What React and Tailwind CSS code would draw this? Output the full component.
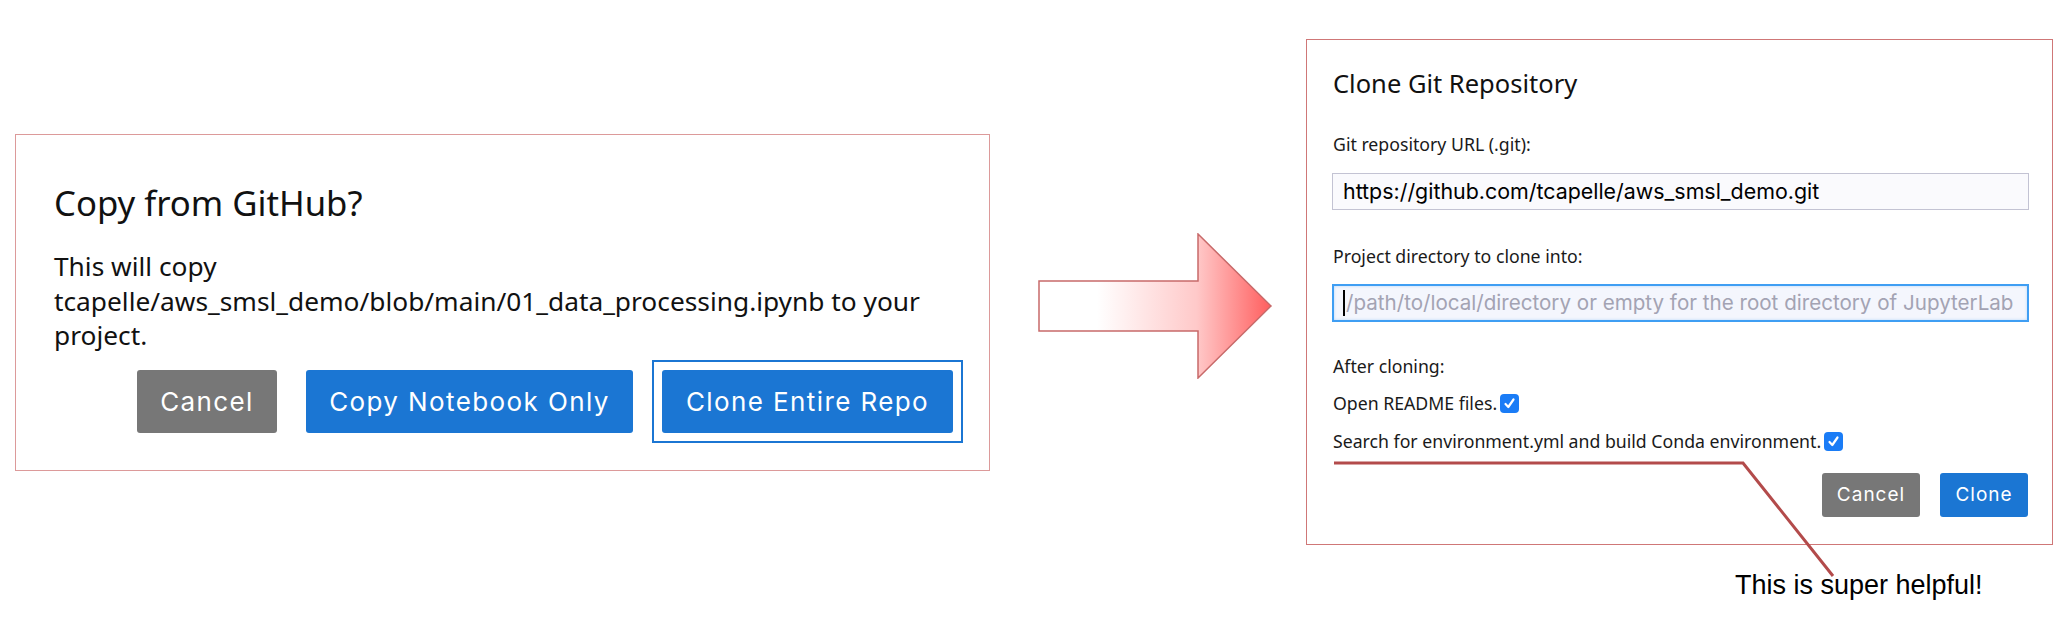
import React from 'react';

const Checkbox = () => (
  <span className="ml-[3px] inline-flex h-[19px] w-[19px] items-center justify-center rounded-[4px] bg-[#1a7cf6]">
    <svg width="13" height="13" viewBox="0 0 13 13" fill="none">
      <path d="M2.5 7l2.8 3L10.5 2.5" stroke="white" strokeWidth="2.2" strokeLinecap="round" strokeLinejoin="round" />
    </svg>
  </span>
);

const App = () => {
  return (
    <div className="relative flex h-[622px] w-[2067px] items-start overflow-hidden bg-white font-['Noto_Sans',sans-serif] text-[#111]">
      {/* Copy from GitHub dialog */}
      <div className="ml-[15px] mt-[134px] h-[337px] w-[975px] shrink-0 border border-[#dc9a9a] pl-[38px] pr-[36px] pt-[46px]">
        <h2 className="text-[34.7px] leading-[44px]">Copy from GitHub?</h2>
        <p className="mt-[24px] whitespace-nowrap text-[26.3px] leading-[34.5px]">
          This will copy
          <br />
          tcapelle/aws_smsl_demo/blob/main/01_data_processing.ipynb to your
          <br />
          project.
        </p>
        <div className="mt-[17px] flex justify-end gap-[29px] font-['Inter',sans-serif] text-[26px] tracking-[1.4px] text-white">
          <button className="h-[63px] w-[140px] rounded-[3px] bg-[#777777]">Cancel</button>
          <button className="h-[63px] w-[327px] rounded-[3px] bg-[#1b76d3]">Copy Notebook Only</button>
          <div className="-m-[10px] border-2 border-[#1b76d3] p-[8px]">
            <button className="h-[63px] w-[291px] rounded-[3px] bg-[#1b76d3]">Clone Entire Repo</button>
          </div>
        </div>
      </div>

      {/* Arrow */}
      <svg className="ml-[48px] mt-[233px] shrink-0" width="236" height="146" viewBox="0 0 236 146">
        <defs>
          <linearGradient id="arrowFill" x1="0" y1="0" x2="1" y2="0">
            <stop offset="0" stopColor="#ffffff" />
            <stop offset="0.25" stopColor="#ffffff" />
            <stop offset="0.68" stopColor="#ffc9c9" />
            <stop offset="1" stopColor="#ff5e5e" />
          </linearGradient>
        </defs>
        <polygon
          points="1,48 160,48 160,1 233,73 160,145 160,98 1,98"
          fill="url(#arrowFill)"
          stroke="#c86a6a"
          strokeWidth="1.5"
        />
      </svg>

      {/* Clone Git Repository dialog */}
      <div className="ml-[32px] mt-[39px] flex shrink-0 flex-col">
        <div className="h-[506px] w-[747px] border border-[#cf7777] pl-[25px] pr-[23px] pt-[27px]">
          <h2 className="pl-px text-[25.5px] leading-[32px]">Clone Git Repository</h2>
          <div className="mt-[33px] pl-px text-[17.7px] leading-[24px] text-[#1a1a1a]">Git repository URL (.git):</div>
          <div className="mt-[17px] flex h-[37px] items-center border border-[#c3c3d3] bg-[#fafafd] pl-[10px] font-['Inter',sans-serif] text-[21.4px] text-black">
            https://github.com/tcapelle/aws_smsl_demo.git
          </div>
          <div className="mt-[34px] pl-px text-[17.7px] leading-[24px] text-[#1a1a1a]">Project directory to clone into:</div>
          <div className="mt-[16px] flex h-[38px] items-center border-2 border-[#3f9ef3] bg-[#f4f6fd] pl-[9px] font-['Inter',sans-serif] text-[20.6px] text-[#a3a3b3] shadow-[inset_0_0_3px_rgba(63,158,243,0.35)]">
            <span className="mr-px h-[26px] w-[2px] bg-black" />
            /path/to/local/directory or empty for the root directory of JupyterLab
          </div>
          <div className="mt-[32px] pl-px text-[17.7px] leading-[24px] text-[#1a1a1a]">After cloning:</div>
          <div className="mt-[13px] flex items-center pl-px text-[17.7px] leading-[24px] text-[#1a1a1a]">
            Open README files.
            <Checkbox />
          </div>
          <div className="mt-[14px] flex items-center pl-px text-[17.7px] leading-[24px] text-[#1a1a1a]">
            Search for environment.yml and build Conda environment.
            <Checkbox />
          </div>
          <div className="mt-[20px] flex justify-end gap-[20px] pr-px font-['Inter',sans-serif] text-[19px] tracking-[1px] text-white">
            <button className="h-[44px] w-[98px] rounded-[3px] bg-[#777777]">Cancel</button>
            <button className="h-[44px] w-[88px] rounded-[3px] bg-[#1b76d3]">Clone</button>
          </div>
        </div>
        <div className="ml-[429px] mt-[25px] font-['Liberation_Sans',Arial,sans-serif] text-[27px] leading-[30px] text-black">
          This is super helpful!
        </div>
      </div>

      {/* Annotation line */}
      <svg className="pointer-events-none absolute left-0 top-0" width="2067" height="622">
        <polyline points="1334,463 1743,463 1833,576" fill="none" stroke="#b34b4b" strokeWidth="3" />
      </svg>
    </div>
  );
};

export default App;
